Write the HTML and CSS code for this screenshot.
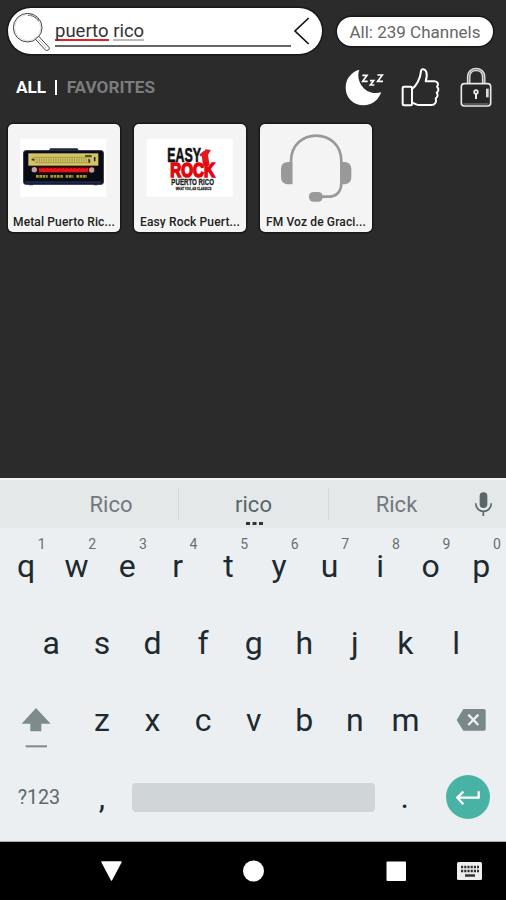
FILE: index.html
```html
<!DOCTYPE html>
<html lang="en">
<head>
<meta charset="utf-8">
<title>Channels</title>
<link rel="stylesheet" href="styles.css">
</head>
<body>
<div class="app">
  <header class="topbar">
    <div class="search">
      <svg class="search-icon" viewBox="33 30 120 123">
        <circle cx="83" cy="80" r="43" fill="none" stroke="#444" stroke-width="3"/>
        <circle cx="83" cy="80" r="39" fill="none" stroke="#bbb" stroke-width="1.5"/>
        <path d="M84 43q22 1 32 19M91 40l25 16" fill="none" stroke="#666" stroke-width="3" stroke-dasharray="6 2"/>
        <path d="M106 114l10-8 31 33q3 5-2 8t-9 0z" fill="#fff" stroke="#444" stroke-width="3"/>
        <path d="M115 115l24 26" stroke="#999" stroke-width="2"/>
      </svg>
      <div class="field"><span class="misspelled">puerto</span> <span class="composing">rico</span></div>
      <svg class="back" viewBox="120 48 54 90"><path d="M167 54L126 93L167 132" fill="none" stroke="#111" stroke-width="5"/></svg>
    </div>
    <div class="count">All: 239 Channels</div>
  </header>
  <nav class="tabs">
    <span class="tab active">ALL</span><span class="bar"></span><span class="tab">FAVORITES</span>
    <div class="tools">
      <svg width="40" height="40" viewBox="276 198 120 120">
        <path d="M319 206C306 240 337 287 385 274C375 298 357 313 332 313C301 313 278 290 278 260C278 234 294 213 319 206Z" fill="#fff"/>
        <path d="M328 223h14l-13 18h15M351 239h11l-10 13h12M373 222h15l-14 19h16" fill="none" stroke="#fff" stroke-width="5"/>
      </svg>
      <svg class="thumb" width="40" height="40" viewBox="444 198 120 120" fill="none" stroke="#fff" stroke-width="6" stroke-linejoin="round">
        <rect x="449" y="257" width="28" height="56" rx="4"/>
        <path d="M477 264C491 254 502 232 504 211C505 201 517 203 520 213C523 223 521 232 518 241H544C555 241 558 251 552 257C559 263 556 272 551 275C556 281 554 289 548 292C552 302 546 312 535 312H498C490 312 486 306 477 306"/>
      </svg>
      <svg class="lock" width="36" height="40" viewBox="615 198 108 120">
        <path d="M647 248V228C647 198 692 198 692 228V248" fill="none" stroke="#ddd" stroke-width="11"/>
        <path d="M647 248V228C647 198 692 198 692 228V248" fill="none" stroke="#555" stroke-width="2"/>
        <rect x="625" y="248" width="88" height="67" rx="9" fill="#262626" stroke="#e8e8e8" stroke-width="5"/>
        <path d="M632 309h74" stroke="#888" stroke-width="3"/>
        <path d="M703 263v26" stroke="#ddd" stroke-width="8"/>
        <circle cx="669" cy="273" r="8" fill="#eee"/><path d="M669 275v19" stroke="#eee" stroke-width="6"/><circle cx="669" cy="273" r="3" fill="#333"/>
      </svg>
    </div>
  </nav>
  <main class="grid">
    <article class="card">
      <svg class="art" viewBox="24 27 336 270">
        <rect x="61" y="71" width="258" height="174" fill="#fff"/>
        <path d="M147 109l5-7h79l5 7" fill="#333" stroke="#222541" stroke-width="4"/>
        <rect x="71" y="107" width="239" height="101" rx="6" fill="#090b12" stroke="#252b51" stroke-width="3"/>
        <rect x="85" y="115" width="210" height="37" fill="#d2c568"/>
        <path d="M98 127h178M105 143h165" stroke="#a99a48" stroke-width="3"/>
        <path d="M103 135h164" stroke="#a69443" stroke-width="10" stroke-dasharray="3 4"/>
        <path d="M95 134h8M255 123h20M268 133v10M284 126v13" stroke="#322c1c" stroke-width="5"/>
        <rect x="93" y="153" width="193" height="22" fill="#290404"/>
        <path d="M117 165h148" stroke="#e71319" stroke-width="14"/>
        <path d="M120 160h140" stroke="#8e1010" stroke-width="3" stroke-dasharray="7 5"/>
        <circle cx="103" cy="164" r="8" fill="#b5a8a4"/><circle cx="275" cy="165" r="8" fill="#b5a8a4"/>
        <path d="M108 184h35m8 0h38m8 0h23m9 0h32" stroke="#a79c26" stroke-width="8" stroke-dasharray="8 2"/>
        <path d="M75 202h230" stroke="#22284a" stroke-width="7"/>
        <path d="M87 209h12M281 209h12" stroke="#252a42" stroke-width="4"/>
      </svg>
      <div class="label">Metal Puerto Ric...</div>
    </article>
    <article class="card">
      <svg class="art" viewBox="12 27 336 270">
        <rect x="50" y="71" width="258" height="174" fill="#fff"/>
        <g class="logo">
          <text x="112" y="142" font-size="60" textLength="101" lengthAdjust="spacingAndGlyphs" fill="#111" stroke="#111" stroke-width="2">EASY</text>
          <path d="M219 152l-4-32 12-17 16 2-9 14 5 33z" fill="#e3171d"/><path d="M210 122l14-12" stroke="#e3171d" stroke-width="7"/>
          <text x="121" y="187" font-size="59" textLength="134" lengthAdjust="spacingAndGlyphs" fill="#e3060c" stroke="#e3060c" stroke-width="5">ROCK</text>
          <text x="124" y="210" font-size="28" textLength="128" lengthAdjust="spacingAndGlyphs" fill="#222" stroke="#222">PUERTO RICO</text>
          <text x="137" y="225" font-size="13" textLength="107" lengthAdjust="spacingAndGlyphs" fill="#333" stroke="#333">WHAT YOU, AS CLASSICS</text>
        </g>
      </svg>
      <div class="label">Easy Rock Puert...</div>
    </article>
    <article class="card">
      <svg class="art" viewBox="390 27 336 270">
        <path d="M483 206V139C483 36 634 36 634 139V203C634 232 617 245 598 245H570" fill="none" stroke="#999" stroke-width="8"/>
        <path d="M487 141V208H472Q453 206 453 187V162Q453 143 472 141ZM631 141H645Q664 143 664 162V187Q664 206 645 208H631Z" fill="#999"/>
        <rect x="537" y="231" width="41" height="29" rx="13" fill="#999"/>
      </svg>
      <div class="label">FM Voz de Graci...</div>
    </article>
  </main>
  <section class="keyboard">
    <div class="suggest">
      <span class="word first">Rico</span><span class="word current">rico<i class="dots"></i></span><span class="word last">Rick</span>
      <svg class="mic" viewBox="666 60 60 78"><rect x="683" y="64" width="23" height="47" rx="11" fill="#59666a"/><path d="M671 97C672 129 717 129 718 97M694 121V135" fill="none" stroke="#59666a" stroke-width="5"/></svg>
    </div>
    <div class="row">
      <span class="key">q<sup>1</sup></span><span class="key">w<sup>2</sup></span><span class="key">e<sup>3</sup></span><span class="key">r<sup>4</sup></span><span class="key">t<sup>5</sup></span><span class="key">y<sup>6</sup></span><span class="key">u<sup>7</sup></span><span class="key">i<sup>8</sup></span><span class="key">o<sup>9</sup></span><span class="key">p<sup>0</sup></span>
    </div>
    <div class="row inset">
      <span class="key">a</span><span class="key">s</span><span class="key">d</span><span class="key">f</span><span class="key">g</span><span class="key">h</span><span class="key">j</span><span class="key">k</span><span class="key">l</span>
    </div>
    <div class="row">
      <span class="wide"><svg width="30" height="46" viewBox="63 112 90 138"><path d="M108 115L152 162H124V185H91V162H65Z" fill="#7d8b8c"/><path d="M77 230H141" stroke="#7d8b8c" stroke-width="6"/></svg></span>
      <span class="key">z</span><span class="key">x</span><span class="key">c</span><span class="key">v</span><span class="key">b</span><span class="key">n</span><span class="key">m</span>
      <span class="wide del"><svg width="30" height="24" viewBox="610 114 90 72"><path d="M632 117H694Q699 117 699 122V177Q699 182 694 182H632L612 150Z" fill="#7b888b"/><path d="M647 134L677 165M677 134L647 165" stroke="#eceff1" stroke-width="7"/></svg></span>
    </div>
    <div class="row bottom">
      <span class="wide sym">?123</span><span class="key">,</span><span class="space"></span><span class="key dot">.</span>
      <span class="wide enterbox"><span class="enter"><svg width="26" height="18" viewBox="609 358 78 54"><path d="M680 365V384H617M634 366L616 384L634 404" fill="none" stroke="#fff" stroke-width="7"/></svg></span></span>
    </div>
  </section>
  <footer class="sysnav">
    <svg viewBox="0 0 506 58">
      <path d="M102 20H121L111.500 38Z" fill="#fff" stroke="#fff" stroke-width="1.500" stroke-linejoin="round"/>
      <circle cx="253.500" cy="29" r="10.500" fill="#fff"/>
      <rect x="386.500" y="19.500" width="19.500" height="19.500" rx="1" fill="#fff"/>
      <rect x="457" y="20" width="25" height="18" rx="1.500" fill="#eee"/>
      <path d="M461 25H479M461 29H479" stroke="#333" stroke-width="2.500" stroke-dasharray="2.200 1"/><path d="M465 33.500H475" stroke="#333" stroke-width="2.500"/>
    </svg>
  </footer>
</div>
</body>
</html>
```
FILE: styles.css
```css
* { box-sizing: border-box; }
body { margin: 0; background: #2b2b2c; font-family: Roboto, "Liberation Sans", sans-serif; }
svg { display: block; flex: none; }
.app { width: 506px; height: 900px; display: flex; flex-direction: column; overflow: hidden; background: #2b2b2c; }
.topbar { display: flex; align-items: center; padding: 8px 13px 0 8px; height: 54px; }
.search { width: 314px; height: 46px; border-radius: 23px; background: #fff; box-shadow: 0 0 0 1.5px #181818; display: flex; align-items: center; padding-left: 3px; }
.search-icon { width: 40px; height: 41px; }
.field { width: 236px; height: 39px; margin-left: 4px; align-self: flex-start; border-bottom: 2px solid #666; font-size: 18.5px; line-height: 22px; padding-top: 12px; color: #333; }
.field span { display: inline-block; height: 21px; }
.misspelled { border-bottom: 2px solid #e32127; }
.composing { border-bottom: 2px solid #bbb; }
.back { width: 18px; height: 30px; margin-left: 2px; }
.count { margin-left: 15px; width: 156px; height: 29px; border-radius: 15px; background: #fff; box-shadow: 0 0 0 1.5px #181818; color: #666; font-size: 17px; line-height: 30px; text-align: center; white-space: nowrap; }
.tabs { height: 70px; display: flex; align-items: center; padding: 0 12px 4px 16px; font-size: 17.2px; font-weight: 700; color: #7c7c7c; }
.active { color: #fff; }
.bar { width: 2px; height: 15px; background: #fff; margin: 0 9.5px 0 9px; }
.tools { margin-left: auto; display: flex; }
.thumb { margin-left: 16px; }
.lock { margin-left: 17px; }
.grid { display: flex; gap: 14px; padding-left: 8px; flex: 1; align-items: flex-start; }
.card { width: 112px; height: 107.500px; border-radius: 5px; background: #f4f4f4; box-shadow: 0 0 0 1.5px #181818; overflow: hidden; }
.art { width: 112px; height: 90px; }
.logo { font-family: "Liberation Sans", sans-serif; font-weight: 700; }
.label { height: 14px; line-height: 17px; font-size: 12px; font-weight: 500; letter-spacing: .14px; color: #222; text-align: center; white-space: nowrap; overflow: hidden; }
.keyboard { height: 364px; background: #eceff1; border-bottom: 1px solid #aaa; border-top: 2px solid #f2f3f3; }
.suggest { height: 47.500px; background: #e4e8e9; display: flex; align-items: center; font-size: 22px; color: #71797c; }
.word { height: 32px; line-height: 33px; text-align: center; }
.first { width: 178px; padding-left: 44px; }
.current { width: 151px; border-left: 1px solid #d3d8da; border-right: 1px solid #d3d8da; color: #59666a; position: relative; }
.dots { position: absolute; left: 67px; bottom: -5px; width: 3.5px; height: 3px; background: #333; box-shadow: 6.500px 0 #333, 13px 0 #333; }
.last { width: 135px; }
.mic { width: 20px; height: 26px; margin-left: 10px; }
.row { height: 77px; display: flex; align-items: center; padding-left: .7px; }
.inset { padding: 0 0 0 26px; }
.key { width: 50.600px; flex: none; line-height: 77px; font-size: 32px; text-align: center; color: #1d2a30; position: relative; }
.key sup { position: absolute; left: 31px; width: 20px; top: 8px; line-height: 16px; font-size: 14px; color: #657074; }
.wide { width: 75.900px; flex: none; display: flex; align-items: center; padding-left: 20.3px; }
.wide svg { margin-top: 20px; }
.wide.del { padding-left: 25.3px; }
.wide.del svg { margin-top: -1px; }
.wide.sym { padding-left: 17px; font-size: 19.700px; color: #5d686c; }
.space { width: 244px; height: 29px; border-radius: 4px; background: #d0d5d7; margin: 0 4.500px; }
.wide.enterbox { padding-left: 16px; }
.enter { width: 44px; height: 44px; border-radius: 50%; background: #48b3a5; display: flex; align-items: center; justify-content: center; }
.wide .enter svg { margin-top: 1px; }
.sysnav { height: 58px; background: #000; }
```
